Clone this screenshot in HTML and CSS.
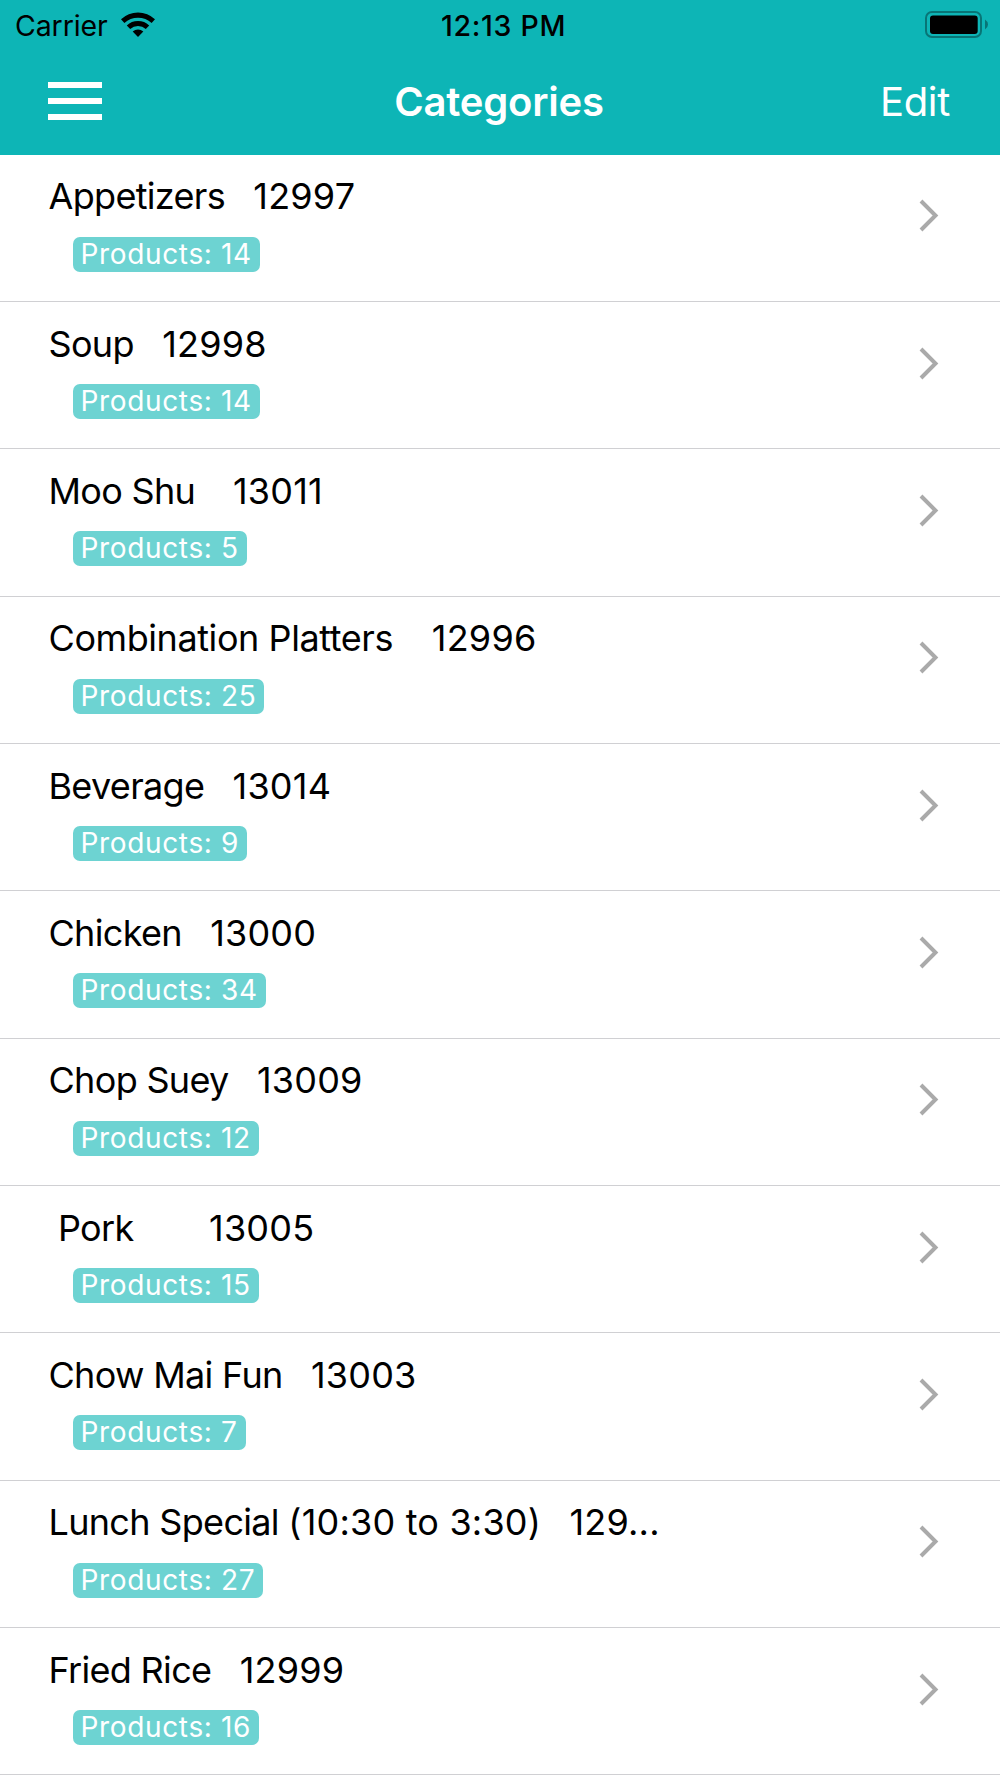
FILE: index.html
```
<!DOCTYPE html>
<html lang="en">
<head>
  <meta charset="UTF-8" />
  <meta name="viewport" content="width=device-width, initial-scale=1.0" />
  <title>Categories</title>
  <link rel="stylesheet" href="styles.css">
</head>
<body>

  <header class="header">
    <!-- Status bar -->
    <div class="status">
      <div class="carrier">
        <span>Carrier</span>
        <svg class="wifi" viewBox="0 0 34 24">
          <path d="M0 6.8 A24.5 24.5 0 0 1 34 6.8 L30.6 10.6 A19.8 19.8 0 0 0 3.4 10.6 Z" />
          <path d="M5.8 13 A16.4 16.4 0 0 1 28.2 13 L24.8 16.4 A11.6 11.6 0 0 0 9.2 16.4 Z" />
          <path d="M11.7 19 A8 8 0 0 1 22.3 19 L17 24.4 Z" />
        </svg>
      </div>
      <span class="time">12:13 PM</span>
      <svg class="battery" viewBox="0 0 64 28">
        <rect class="shell" x="1" y="1" width="55" height="25" rx="6" />
        <rect x="5" y="4.5" width="47.7" height="18.5" rx="3" />
        <path class="cap" d="M60 8.5 Q63 10.5 63 13.5 Q63 16.5 60 18.5 Z" />
      </svg>
    </div>

    <!-- Navigation bar -->
    <nav class="nav">
      <div class="menu"><i></i><i></i><i></i></div>
      <h1>Categories</h1>
      <span class="edit">Edit</span>
    </nav>
  </header>

  <main class="list">
    <div class="row">
      <div class="info"><p class="name">Appetizers   <span class="num">12997</span></p><span class="badge">Products: 14</span></div>
      <svg class="chevron" viewBox="0 0 20 34"><path d="M2 2 L16.5 16.5 L2 31" /></svg>
    </div>
    <div class="row">
      <div class="info"><p class="name">Soup   <span class="num">12998</span></p><span class="badge">Products: 14</span></div>
      <svg class="chevron" viewBox="0 0 20 34"><path d="M2 2 L16.5 16.5 L2 31" /></svg>
    </div>
    <div class="row">
      <div class="info"><p class="name">Moo Shu    <span class="num">13011</span></p><span class="badge">Products: 5</span></div>
      <svg class="chevron" viewBox="0 0 20 34"><path d="M2 2 L16.5 16.5 L2 31" /></svg>
    </div>
    <div class="row">
      <div class="info"><p class="name wide">Combination Platters    <span class="num">12996</span></p><span class="badge">Products: 25</span></div>
      <svg class="chevron" viewBox="0 0 20 34"><path d="M2 2 L16.5 16.5 L2 31" /></svg>
    </div>
    <div class="row">
      <div class="info"><p class="name">Beverage   <span class="num">13014</span></p><span class="badge">Products: 9</span></div>
      <svg class="chevron" viewBox="0 0 20 34"><path d="M2 2 L16.5 16.5 L2 31" /></svg>
    </div>
    <div class="row">
      <div class="info"><p class="name">Chicken   <span class="num">13000</span></p><span class="badge">Products: 34</span></div>
      <svg class="chevron" viewBox="0 0 20 34"><path d="M2 2 L16.5 16.5 L2 31" /></svg>
    </div>
    <div class="row">
      <div class="info"><p class="name">Chop Suey   <span class="num">13009</span></p><span class="badge">Products: 12</span></div>
      <svg class="chevron" viewBox="0 0 20 34"><path d="M2 2 L16.5 16.5 L2 31" /></svg>
    </div>
    <div class="row">
      <div class="info"><p class="name"> Pork        <span class="num">13005</span></p><span class="badge">Products: 15</span></div>
      <svg class="chevron" viewBox="0 0 20 34"><path d="M2 2 L16.5 16.5 L2 31" /></svg>
    </div>
    <div class="row">
      <div class="info"><p class="name">Chow Mai Fun   <span class="num">13003</span></p><span class="badge">Products: 7</span></div>
      <svg class="chevron" viewBox="0 0 20 34"><path d="M2 2 L16.5 16.5 L2 31" /></svg>
    </div>
    <div class="row">
      <div class="info"><p class="name">Lunch Special <span class="num">(10:30 to 3:30)</span>   <span class="num">129...</span></p><span class="badge">Products: 27</span></div>
      <svg class="chevron" viewBox="0 0 20 34"><path d="M2 2 L16.5 16.5 L2 31" /></svg>
    </div>
    <div class="row">
      <div class="info"><p class="name">Fried Rice   <span class="num">12999</span></p><span class="badge">Products: 16</span></div>
      <svg class="chevron" viewBox="0 0 20 34"><path d="M2 2 L16.5 16.5 L2 31" /></svg>
    </div>
  </main>

</body>
</html>
```
FILE: styles.css
```
* {
  box-sizing: border-box;
}
body, html {
  margin: 0;
  padding: 0;
  font-family: Inter, sans-serif;
  background-color: #fff;
  overflow: hidden;
}
.header {
  height: 154.7px;
  background: #0db5b6;
}
.status {
  display: grid;
  grid-template-columns: 1fr auto 1fr;
  align-items: center;
  height: 50px;
  padding: 0 11px 0 15px;
  font-size: 28.5px;
  color: #000;
}
.carrier {
  display: flex;
  align-items: center;
  gap: 13px;
  letter-spacing: -0.1px;
}
.wifi {
  width: 34px;
  height: 25px;
  margin-bottom: 2px;
}
.time {
  padding-left: 3px;
  font-weight: 550;
  font-size: 28.5px;
  letter-spacing: 0.7px;
}
.battery {
  width: 64px;
  height: 28px;
  justify-self: end;
}
.shell {
  fill: none;
  stroke: #087576;
  stroke-width: 2;
}
.cap {
  fill: #087576;
}
.nav {
  display: grid;
  grid-template-columns: 1fr auto 1fr;
  align-items: center;
  height: 102px;
  padding: 0 50px 0 48px;
  color: #fff;
}
.nav h1 {
  margin: 0;
  font-size: 40px;
  font-weight: 600;
  letter-spacing: -0.2px;
}
.menu {
  display: flex;
  flex-direction: column;
  gap: 10px;
  width: 54px;
}
.menu i {
  height: 6px;
  background: #fff;
}
.edit {
  justify-self: end;
  font-size: 40px;
  letter-spacing: -0.3px;
}
.row {
  display: flex;
  justify-content: space-between;
  height: 147.35px;
  padding: 19.5px 61px 0 48.5px;
  border-bottom: 1px solid #d0d0d3;
}
.name {
  margin: 0;
  font-size: 36px;
  line-height: 44px;
  letter-spacing: -0.68px;
  white-space: pre;
  color: #000;
}
.name.wide {
  letter-spacing: -0.42px;
}
.num {
  letter-spacing: 0.2px;
}
.badge {
  display: block;
  width: fit-content;
  height: 35px;
  margin: 18.5px 0 0 24px;
  padding: 0 8px;
  border-radius: 7px;
  background: #6dd3d2;
  color: #fff;
  font-size: 28px;
  line-height: 35px;
  letter-spacing: 0.65px;
  white-space: nowrap;
}
.chevron {
  width: 20px;
  height: 34px;
  margin-top: 25px;
  fill: none;
  stroke: #aaa;
  stroke-width: 4;
}
```
